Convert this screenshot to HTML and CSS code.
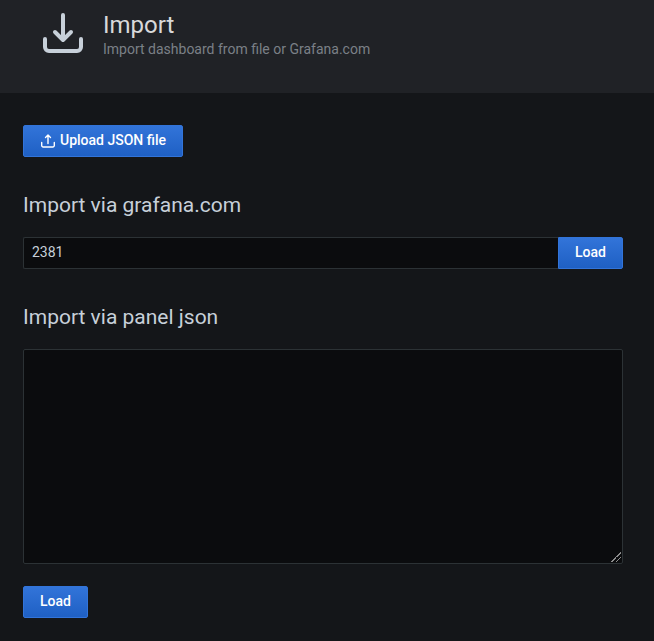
FILE: index.html
```html
<!DOCTYPE html>
<html lang="en">
<head>
    <meta charset="UTF-8">
    <meta name="viewport" content="width=device-width, initial-scale=1.0">
    <title>Import - Grafana</title>
    <link rel="stylesheet" href="styles.css">
</head>
<body>
    <header class="page-header">
        <svg class="page-icon" viewBox="0 0 48 48" aria-hidden="true">
            <path d="M24 6v24M16 23l8 8 8-8M6 30v8a4 4 0 0 0 4 4h28a4 4 0 0 0 4-4v-8"/>
        </svg>
        <div class="page-title">
            <h1>Import</h1>
            <p>Import dashboard from file or Grafana.com</p>
        </div>
    </header>

    <main class="page-body">
        <button type="button" class="btn">
            <svg class="btn-icon" viewBox="0 0 16 16" aria-hidden="true">
                <path d="M8 10.500V2.500M5.500 4.500L8 2l2.500 2.500M1.700 9.500v3a1.500 1.500 0 0 0 1.500 1.500h9.600a1.500 1.500 0 0 0 1.500-1.500v-3"/>
            </svg>
            Upload JSON file
        </button>

        <form class="import-form">
            <label class="form-title" for="dashboardId">Import via grafana.com</label>
            <div class="input-group">
                <input type="text" id="dashboardId" class="form-input" value="2381">
                <button type="button" class="btn btn-attached">Load</button>
            </div>
        </form>

        <form class="import-form">
            <label class="form-title" for="panelJson">Import via panel json</label>
            <textarea id="panelJson" class="form-textarea" rows="10"></textarea>
            <button type="button" class="btn">Load</button>
        </form>
    </main>
</body>
</html>
```
FILE: styles.css
```css
* {
    margin: 0;
    padding: 0;
    box-sizing: border-box;
}

body {
    font-family: Roboto, "Liberation Sans", sans-serif;
    font-size: 14px;
    line-height: 20px;
    color: #c7d0d9;
    background: #141619;
}

.page-header {
    display: flex;
    gap: 16px;
    padding: 9px 39px 36px;
    background: #202226;
}

.page-icon {
    width: 48px;
    height: 48px;
    fill: none;
    stroke: #c7d0d9;
    stroke-width: 4;
    stroke-linecap: round;
    stroke-linejoin: round;
}

.page-title h1 {
    font-size: 24px;
    font-weight: 400;
    line-height: 32px;
    color: #d8d9da;
}

.page-title p {
    line-height: 16px;
    color: #7b8087;
}

.page-body {
    padding: 32px 31px 23px 23px;
}

.btn {
    display: inline-flex;
    align-items: center;
    height: 32px;
    padding: 0 16px 2px;
    font-family: inherit;
    font-size: 14px;
    font-weight: 500;
    color: #fff;
    background: linear-gradient(#3274d9, #1f60c4);
    border: 1px solid #3274d9;
    border-radius: 2px;
    cursor: pointer;
}

.btn-icon {
    width: 16px;
    height: 16px;
    margin-top: 2px;
    margin-right: 4px;
    fill: none;
    stroke: currentColor;
    stroke-width: 1.4;
    stroke-linecap: round;
    stroke-linejoin: round;
}

.import-form {
    margin-top: 32px;
}

.form-title {
    display: block;
    margin-bottom: 16px;
    font-size: 21px;
    line-height: 32px;
}

.input-group {
    display: flex;
}

.form-input,
.form-textarea {
    font-family: inherit;
    font-size: 14px;
    color: #c7d0d9;
    background: #0b0c0e;
    border: 1px solid #2c3235;
    border-radius: 2px;
}

.form-input {
    flex: 1;
    min-width: 0;
    height: 32px;
    padding: 0 8px 2px;
    border-right: none;
    border-radius: 2px 0 0 2px;
}

.btn-attached {
    border-radius: 0 2px 2px 0;
}

.form-textarea {
    display: block;
    width: 100%;
    height: 215px;
    margin-bottom: 22px;
    padding: 8px;
    resize: vertical;
}

/* Two diagonal grip lines in the resize corner */
.form-textarea::-webkit-resizer {
    background:
        linear-gradient(135deg, transparent 48%, #8c8c8c 48%, #8c8c8c 55%, transparent 55%) right 1px bottom 1px / 10px 10px no-repeat,
        linear-gradient(135deg, transparent 44%, #8c8c8c 44%, #8c8c8c 58%, transparent 58%) right 1px bottom 1px / 5px 5px no-repeat;
}
```
